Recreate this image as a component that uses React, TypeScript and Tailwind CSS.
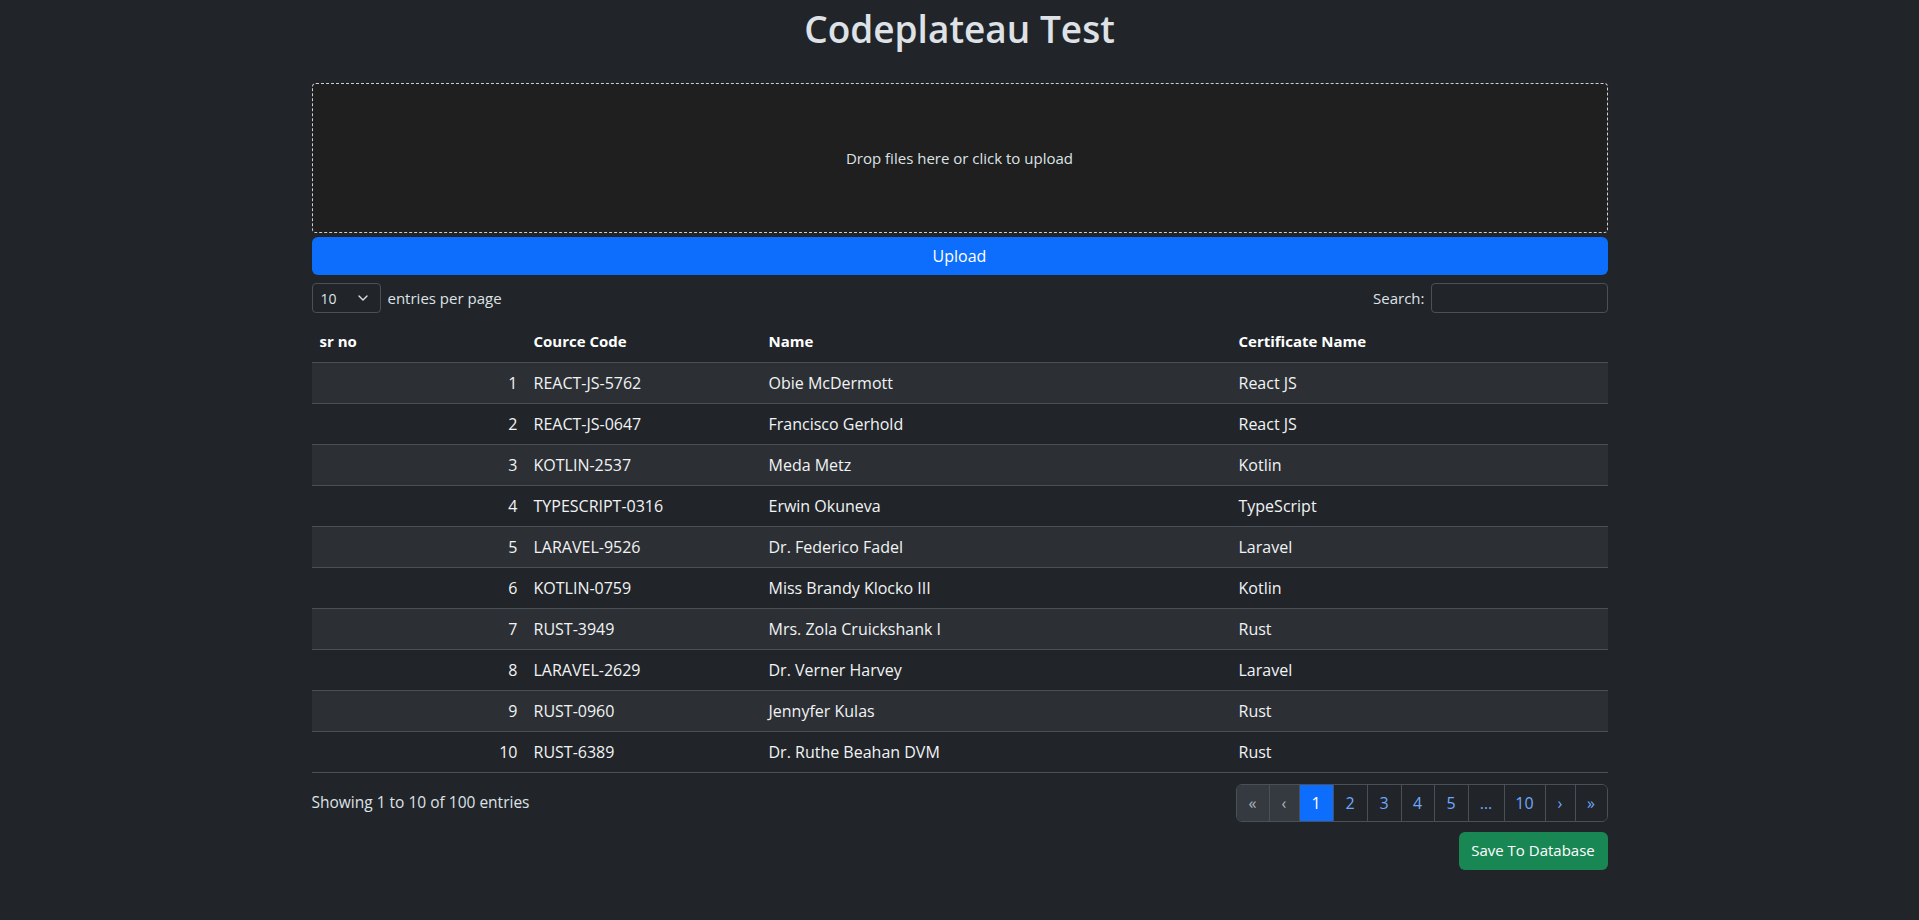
import { ChevronDown } from "lucide-react";

const ROWS: { code: string; name: string; cert: string }[] = [
  { code: "REACT-JS-5762", name: "Obie McDermott", cert: "React JS" },
  { code: "REACT-JS-0647", name: "Francisco Gerhold", cert: "React JS" },
  { code: "KOTLIN-2537", name: "Meda Metz", cert: "Kotlin" },
  { code: "TYPESCRIPT-0316", name: "Erwin Okuneva", cert: "TypeScript" },
  { code: "LARAVEL-9526", name: "Dr. Federico Fadel", cert: "Laravel" },
  { code: "KOTLIN-0759", name: "Miss Brandy Klocko III", cert: "Kotlin" },
  { code: "RUST-3949", name: "Mrs. Zola Cruickshank I", cert: "Rust" },
  { code: "LARAVEL-2629", name: "Dr. Verner Harvey", cert: "Laravel" },
  { code: "RUST-0960", name: "Jennyfer Kulas", cert: "Rust" },
  { code: "RUST-6389", name: "Dr. Ruthe Beahan DVM", cert: "Rust" },
];

const PAGES: { label: string; w: string; state: "disabled" | "active" | "link" }[] = [
  { label: "«", w: "w-[32px]", state: "disabled" },
  { label: "‹", w: "w-[30px]", state: "disabled" },
  { label: "1", w: "w-[34px]", state: "active" },
  { label: "2", w: "w-[34px]", state: "link" },
  { label: "3", w: "w-[34px]", state: "link" },
  { label: "4", w: "w-[33px]", state: "link" },
  { label: "5", w: "w-[34px]", state: "link" },
  { label: "…", w: "w-[36px]", state: "link" },
  { label: "10", w: "w-[41px]", state: "link" },
  { label: "›", w: "w-[30px]", state: "link" },
  { label: "»", w: "w-[32px]", state: "link" },
];

function Pagination() {
  return (
    <div className="flex h-[38px] rounded-md border border-[#495057] overflow-hidden">
      {PAGES.map((p, i) => (
        <div
          key={i}
          className={`${p.w} flex items-center justify-center text-base ${
            i > 0 ? "border-l border-[#495057]" : ""
          } ${
            p.state === "active"
              ? "bg-[#0d6efd] text-white"
              : p.state === "disabled"
              ? "bg-[#343a40] text-[#adb5bd]"
              : "bg-[#212529] text-[#6ea8fe]"
          }`}
        >
          {p.label}
        </div>
      ))}
    </div>
  );
}

export default function App() {
  return (
    <div
      className="min-h-[920px] bg-[#212529] text-[#dee2e6] text-base"
      style={{ fontFamily: '"Open Sans", "Noto Sans", sans-serif' }}
    >
      <div className="w-[1296px] mx-auto">
        <h1 className="text-center text-[37px] leading-[48px] font-semibold pt-[5px] mb-[30px]">
          Codeplateau Test
        </h1>

        <div className="h-[150px] bg-[#1f1f1f] border border-dashed border-[#cfcfcf] rounded-[4px] flex items-center justify-center text-[15px]">
          Drop files here or click to upload
        </div>

        <button className="mt-[4px] w-full h-[38px] rounded-md bg-[#0d6efd] text-white text-base">
          Upload
        </button>

        <div className="flex items-center justify-between mt-[8px] h-[30px]">
          <div className="flex items-center gap-[7px]">
            <div className="w-[69px] h-[30px] rounded-[4px] border border-[#495057] flex items-center justify-between pl-[8px] pr-[9px] text-[14px]">
              <span>10</span>
              <ChevronDown size={16} strokeWidth={2} className="text-[#dee2e6]" />
            </div>
            <span className="text-[15px]">entries per page</span>
          </div>
          <div className="flex items-center gap-[6px]">
            <span className="text-[15px]">Search:</span>
            <div className="w-[177px] h-[30px] rounded-[4px] border border-[#495057]" />
          </div>
        </div>

        <table className="w-full table-fixed mt-[8px] border-collapse">
          <colgroup>
            <col className="w-[214px]" />
            <col className="w-[235px]" />
            <col className="w-[470px]" />
            <col className="w-[377px]" />
          </colgroup>
          <thead>
            <tr className="h-[41px] border-b border-[#495057] text-white font-bold text-[15px]">
              <th className="text-left px-2">sr no</th>
              <th className="text-left px-2">Cource Code</th>
              <th className="text-left px-2">Name</th>
              <th className="text-left px-2">Certificate Name</th>
            </tr>
          </thead>
          <tbody className="text-base text-[#f1f3f5]">
            {ROWS.map((r, i) => (
              <tr
                key={r.code}
                className={`h-[41px] border-b border-[#495057] ${i % 2 === 0 ? "bg-[#2c3034]" : ""}`}
              >
                <td className="text-right px-2">{i + 1}</td>
                <td className="px-2">{r.code}</td>
                <td className="px-2">{r.name}</td>
                <td className="px-2">{r.cert}</td>
              </tr>
            ))}
          </tbody>
        </table>

        <div className="flex items-center justify-between mt-[11px]">
          <span className="text-[15.5px]">Showing 1 to 10 of 100 entries</span>
          <Pagination />
        </div>

        <div className="flex justify-end mt-[10px]">
          <button className="h-[38px] w-[149px] rounded-md bg-[#198754] text-white text-[15px]">
            Save To Database
          </button>
        </div>
      </div>
    </div>
  );
}
